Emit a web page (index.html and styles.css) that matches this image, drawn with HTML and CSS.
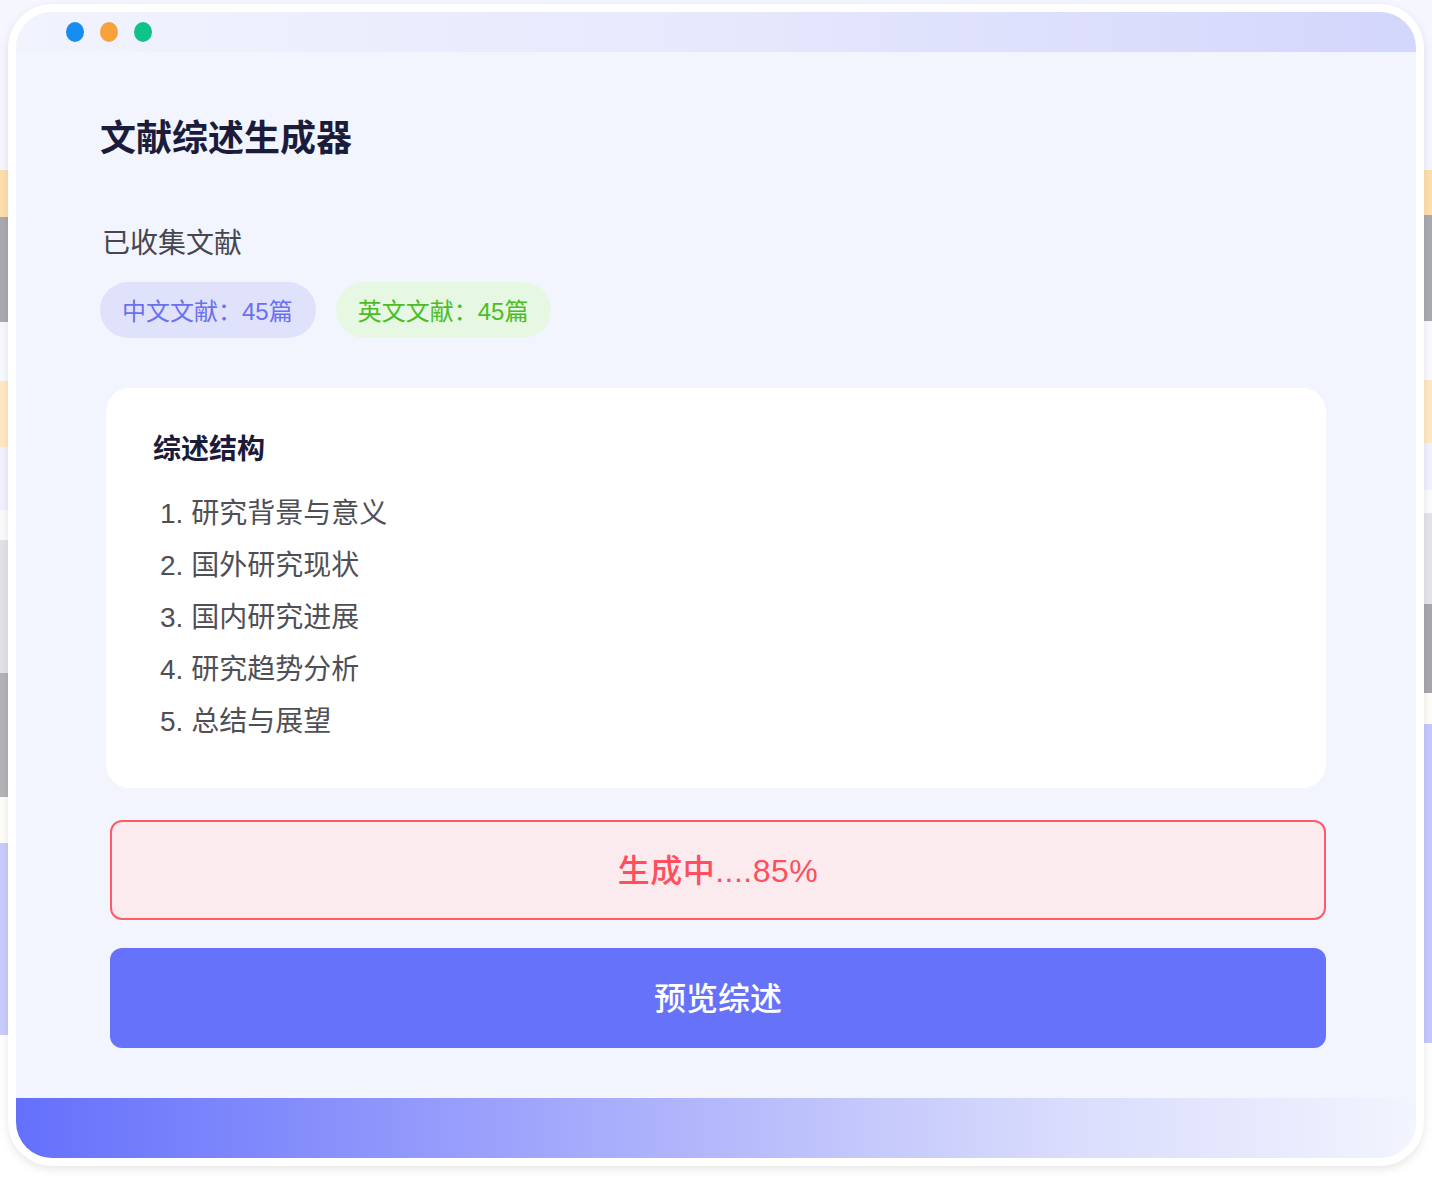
FILE: index.html
```html
<!DOCTYPE html>
<html lang="zh-CN">
<head>
<meta charset="utf-8">
<title>文献综述生成器</title>
<link rel="stylesheet" href="styles.css">
</head>
<body>
<div class="frame">
  <div class="screen">
    <div class="topbar">
      <span class="dot dot-blue"></span>
      <span class="dot dot-orange"></span>
      <span class="dot dot-green"></span>
    </div>
    <main class="content">
      <h1 class="title">文献综述生成器</h1>
      <div class="subtitle">已收集文献</div>
      <div class="tags">
        <span class="tag tag-cn">中文文献：45篇</span>
        <span class="tag tag-en">英文文献：45篇</span>
      </div>
      <section class="card">
        <h2 class="card-title">综述结构</h2>
        <div class="outline">
          <div class="outline-item">1. 研究背景与意义</div>
          <div class="outline-item">2. 国外研究现状</div>
          <div class="outline-item">3. 国内研究进展</div>
          <div class="outline-item">4. 研究趋势分析</div>
          <div class="outline-item">5. 总结与展望</div>
        </div>
      </section>
      <div class="progress">生成中....85%</div>
      <button class="preview-btn" type="button">预览综述</button>
    </main>
    <div class="bottombar"></div>
  </div>
</div>
</body>
</html>
```
FILE: styles.css
```css
* {
  box-sizing: border-box;
}

html, body {
  margin: 0;
  padding: 0;
}

body {
  width: 1432px;
  height: 1178px;
  overflow: hidden;
  font-family: "Liberation Sans", "Noto Sans CJK SC", sans-serif;
  background-color: #ffffff;
  background-image:
    linear-gradient(to bottom,
      #f5f6ff 0, #f5f6ff 170px,
      #ffdfae 170px, #ffdfae 217px,
      #a9a9b2 217px, #a9a9b2 322px,
      #f8f8ff 322px, #f8f8ff 381px,
      #ffe8c4 381px, #ffe8c4 447px,
      #f1f1ff 447px, #f1f1ff 510px,
      #fbfbfd 510px, #fbfbfd 540px,
      #e2e2e8 540px, #e2e2e8 673px,
      #b4b4b8 673px, #b4b4b8 797px,
      #fffdf7 797px, #fffdf7 843px,
      #c9cdfe 843px, #c9cdfe 1035px,
      #ffffff 1035px, #ffffff 1178px),
    linear-gradient(to bottom,
      #f5f6ff 0, #f5f6ff 170px,
      #ffdfae 170px, #ffdfae 215px,
      #a9a9b0 215px, #a9a9b0 321px,
      #fafaff 321px, #fafaff 380px,
      #ffe8c4 380px, #ffe8c4 443px,
      #f1f1ff 443px, #f1f1ff 490px,
      #fcfcfe 490px, #fcfcfe 513px,
      #e4e4ea 513px, #e4e4ea 604px,
      #a8a8ac 604px, #a8a8ac 693px,
      #fffdf7 693px, #fffdf7 724px,
      #c6c9fe 724px, #c6c9fe 1043px,
      #ffffff 1043px, #ffffff 1178px);
  background-size: 50% 100%, 50% 100%;
  background-position: left top, right top;
  background-repeat: no-repeat;
}

.frame {
  margin: 4px 8px 0 8px;
  width: 1416px;
  height: 1162px;
  padding: 8px;
  background: #ffffff;
  border-radius: 44px;
  box-shadow: 0 3px 10px rgba(0, 0, 0, 0.10);
}

.screen {
  width: 1400px;
  height: 1146px;
  border-radius: 36px;
  overflow: hidden;
  background: #f2f5fe;
  display: flex;
  flex-direction: column;
}

.topbar {
  height: 40px;
  flex: none;
  background: linear-gradient(to right, #f1f3fe 0%, #e6e8fd 50%, #d3d6fb 100%);
  display: flex;
  align-items: center;
  gap: 16px;
  padding-left: 50px;
}

.dot {
  width: 18px;
  height: 20px;
  border-radius: 50%;
  display: block;
}

.dot-blue { background: #178cf1; }
.dot-orange { background: #f8a03b; }
.dot-green { background: #0fc28a; }

.content {
  flex: 1;
  padding: 0 90px 0 84px;
  display: flex;
  flex-direction: column;
  align-items: stretch;
}

.title {
  margin: 62px 0 0 0;
  font-size: 36px;
  line-height: 50px;
  font-weight: 700;
  color: #1b1c3a;
}

.subtitle {
  margin-top: 60px;
  margin-left: 2px;
  font-size: 28px;
  line-height: 40px;
  color: #464650;
}

.tags {
  margin-top: 18px;
  display: flex;
  gap: 20px;
}

.tag {
  height: 56px;
  line-height: 56px;
  padding: 2px 23px 0 22px;
  border-radius: 28px;
  font-size: 24px;
}

.tag-cn {
  background: #e0e2fc;
  color: #6a70f0;
}

.tag-en {
  background: #e6f7e2;
  color: #4cbd27;
}

.card {
  margin-top: 50px;
  margin-left: 6px;
  background: #ffffff;
  border-radius: 24px;
  padding: 42px 40px 40px 47px;
}

.card-title {
  margin: 0;
  font-size: 28px;
  line-height: 40px;
  font-weight: 600;
  color: #1b1c3a;
}

.outline {
  margin-top: 18px;
  padding-left: 7px;
}

.outline-item {
  font-size: 28px;
  line-height: 52px;
  color: #4f4f55;
}

.progress {
  margin-top: 32px;
  margin-left: 10px;
  height: 100px;
  padding-bottom: 4px;
  border: 2px solid #ff5a66;
  border-radius: 12px;
  background: #fcebee;
  color: #ff4f5c;
  font-size: 32px;
  font-weight: 500;
  letter-spacing: 0.5px;
  display: flex;
  align-items: center;
  justify-content: center;
}

.preview-btn {
  margin-top: 28px;
  margin-left: 10px;
  height: 100px;
  border: none;
  border-radius: 12px;
  background: #6772fb;
  color: #ffffff;
  font-family: inherit;
  font-size: 32px;
  font-weight: 500;
  padding: 0 0 4px 0;
}

.bottombar {
  height: 60px;
  flex: none;
  background: linear-gradient(to right, #6470fb 0%, #a5aafb 40%, #d9dcfc 75%, #f2f4fe 100%);
}
```
